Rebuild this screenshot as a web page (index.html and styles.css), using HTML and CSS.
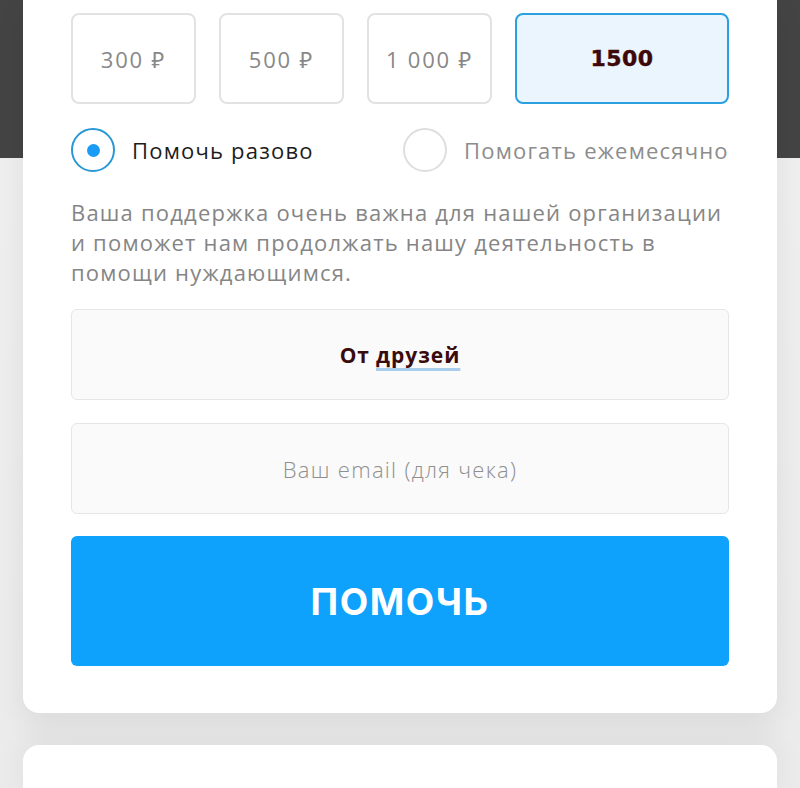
FILE: index.html
```html
<!DOCTYPE html>
<html lang="ru">
<head>
<meta charset="utf-8">
<link rel="stylesheet" href="styles.css">
</head>
<body>
<div class="page">
  <div class="card">
    <div class="amounts">
      <div class="amount">300 ₽</div>
      <div class="amount">500 ₽</div>
      <div class="amount">1 000 ₽</div>
      <div class="amount amount-custom">1500</div>
    </div>
    <div class="radios">
      <div class="radio radio-on"><span class="dot"></span><span class="radio-label">Помочь разово</span></div>
      <div class="radio"><span class="dot"></span><span class="radio-label">Помогать ежемесячно</span></div>
    </div>
    <p class="note">Ваша поддержка очень важна для нашей организации и поможет нам продолжать нашу деятельность в помощи нуждающимся.</p>
    <div class="field field-filled">От <span class="spell">друзей</span></div>
    <div class="field field-empty">Ваш email (для чека)</div>
    <div class="submit">ПОМОЧЬ</div>
  </div>
  <div class="card card-next"></div>
</div>
</body>
</html>
```

FILE: styles.css
```css
html, body {
  margin: 0;
  padding: 0;
}
body {
  width: 800px;
  height: 788px;
  overflow: hidden;
  background: linear-gradient(to bottom, #444444 0, #444444 158px, #efefef 158px, #ebebeb 100%);
  font-family: "Open Sans", "Noto Sans", sans-serif;
}
.page {
  display: flex;
  flex-direction: column;
  gap: 32px;
  padding: 0 23px;
}
.card {
  background: #ffffff;
  border-radius: 0 0 16px 16px;
  padding: 13px 48px 47px;
  box-shadow: 0 12px 30px rgba(0, 0, 0, 0.07);
  display: flex;
  flex-direction: column;
}
.card-next {
  border-radius: 16px 16px 0 0;
  height: 60px;
  padding: 0;
  box-shadow: 0 -10px 30px rgba(0, 0, 0, 0.05);
}
.amounts {
  display: grid;
  grid-template-columns: 125px 125px 125px 1fr;
  gap: 23px;
}
.amount {
  height: 87px;
  border: 2px solid #e2e2e2;
  border-radius: 8px;
  display: flex;
  align-items: center;
  justify-content: center;
  color: #888888;
  font-size: 22px;
  letter-spacing: 1.8px;
}
.amount-custom {
  background: #eaf5fe;
  border-color: #2aa0e0;
  color: #3e0808;
  font-family: "DejaVu Sans", sans-serif;
  font-weight: 700;
  font-size: 22px;
  letter-spacing: 0.5px;
  -webkit-text-stroke: 0.4px #3e0808;
}
.radios {
  display: grid;
  grid-template-columns: 332px 1fr;
  height: 44px;
  margin-top: 24px;
}
.radio {
  display: flex;
  align-items: center;
  gap: 17px;
  white-space: nowrap;
}
.dot {
  width: 40px;
  height: 40px;
  border: 2px solid #dedede;
  border-radius: 50%;
  display: flex;
  align-items: center;
  justify-content: center;
  flex: none;
}
.radio-on .dot {
  border-color: #2a98d6;
}
.radio-on .dot::after {
  content: "";
  width: 13px;
  height: 13px;
  border-radius: 50%;
  background: #1a9bf6;
}
.radio-label {
  font-size: 22px;
  letter-spacing: 1.2px;
  color: #8c8c8c;
}
.radio-on .radio-label {
  color: #1c1c1c;
}
.note {
  margin: 25px 0 0;
  font-size: 22px;
  letter-spacing: 1.2px;
  line-height: 30px;
  color: #858585;
}
.field {
  height: 89px;
  margin-top: 22px;
  background: #fafafa;
  border: 1px solid #e6e6e6;
  border-radius: 6px;
  display: flex;
  align-items: center;
  justify-content: center;
  font-size: 21px;
}
.field-filled {
  font-weight: 700;
  color: #3a0b0b;
  letter-spacing: 1px;
  gap: 6px;
}
.spell {
  text-decoration: underline;
  text-decoration-color: #a9cdec;
  text-decoration-thickness: 3px;
  text-underline-offset: 5px;
  text-decoration-skip-ink: none;
}
.field-empty {
  margin-top: 23px;
  font-weight: 300;
  font-size: 22px;
  letter-spacing: 1.3px;
  color: #8f8f8f;
}
.submit {
  height: 130px;
  margin-top: 22px;
  background: #0ea2fd;
  border-radius: 6px;
  display: flex;
  align-items: center;
  justify-content: center;
  color: #ffffff;
  font-family: Inter, sans-serif;
  font-weight: 700;
  font-size: 37px;
  letter-spacing: 1.5px;
}
```
